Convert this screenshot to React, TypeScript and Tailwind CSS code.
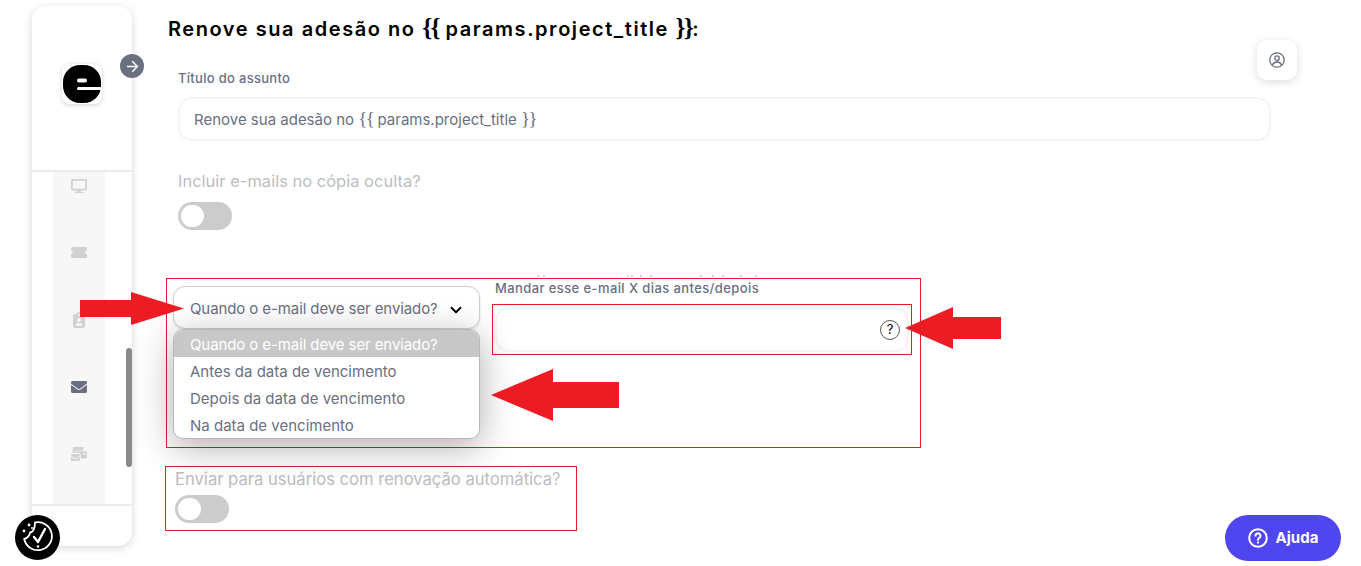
import React from "react";
import { FaDesktop, FaEnvelope, FaMailBulk } from "react-icons/fa";
import { FaClipboardUser } from "react-icons/fa6";
import { ArrowRight, ChevronDown } from "lucide-react";

const font = "font-['Inter','Liberation_Sans',sans-serif]";
const brace = "font-['Liberation_Serif',serif] text-[1.25em] leading-none tracking-[-1.5px]";

function Toggle() {
  return (
    <div className="h-[28px] w-[54px] rounded-full bg-[#cccccc] p-[3px]">
      <div className="h-[22px] w-[23px] rounded-full bg-white" />
    </div>
  );
}

function Arrow({ cls, w, h, points }: { cls: string; w: number; h: number; points: string }) {
  return (
    <svg className={`absolute ${cls}`} width={w} height={h} viewBox={`0 0 ${w} ${h}`}>
      <polygon points={points} fill="#ed1c24" />
    </svg>
  );
}

function NavIcon({ children, className = "text-[#d1d1d1]" }: { children: React.ReactNode; className?: string }) {
  return <div className={`flex h-[67px] items-center justify-center text-[16px] ${className}`}>{children}</div>;
}

function Braced({ before, after }: { before: string; after: string }) {
  return (
    <span>
      {before}
      <span className={brace}>{"{{"}</span>
      {" params.project_title "}
      <span className={brace}>{"}}"}</span>
      {after}
    </span>
  );
}

const ticks = [47, 53, 137, 141, 150, 160, 210, 222, 232, 250, 265];

export default function App() {
  return (
    <div className={`${font} relative flex h-[566px] w-[1361px] overflow-hidden bg-white`}>
      {/* Sidebar */}
      <aside className="relative z-0 ml-[32px] mt-[6px] flex h-[540px] w-[100px] flex-col rounded-[14px] bg-white shadow-[0_2px_8px_rgba(0,0,0,0.16)]">
        <div className="flex h-[166px] items-center justify-center border-b-2 border-[#ececec]">
          <div className="-mt-[8px] h-[40px] w-[40px] rounded-[8px] bg-white shadow-[0_1px_5px_rgba(0,0,0,0.18)]">
            <svg width="40" height="40" viewBox="0 0 40 40">
              <rect x="1" y="1" width="38" height="38" rx="17" fill="#000" />
              <rect x="15" y="23" width="25" height="3" rx="1.500" fill="#fff" />
              <rect x="15" y="14.500" width="10" height="4" rx="2" fill="#fff" />
            </svg>
          </div>
        </div>
        <div className="flex flex-1 flex-col overflow-hidden">
          <div className="ml-[21px] w-[52px] flex-1 bg-[#f7f7f7]">
            <NavIcon className="-mt-[20px] text-[#d1d1d1]"><FaDesktop /></NavIcon>
            <NavIcon>
              <svg width="16" height="11" viewBox="0 0 16 11" fill="#d1d1d1">
                <path d="M1.500 0h13A1.500 1.500 0 0 1 16 1.500v2.300a1.700 1.700 0 0 0 0 3.400v2.300a1.500 1.500 0 0 1-1.500 1.500h-13A1.500 1.500 0 0 1 0 9.500V7.200a1.700 1.700 0 0 0 0-3.400V1.500A1.500 1.500 0 0 1 1.500 0Z" />
              </svg>
            </NavIcon>
            <NavIcon><FaClipboardUser /></NavIcon>
            <NavIcon className="text-[#6b7080]"><FaEnvelope /></NavIcon>
            <NavIcon><FaMailBulk /></NavIcon>
          </div>
        </div>
        <div className="h-[42px] border-t-2 border-[#ececec]" />
        <div className="absolute left-[94px] top-[342px] h-[119px] w-[6px] rounded-full bg-[#8a8a8a]" />
        <div className="absolute left-[88px] top-[48px] flex h-[24px] w-[24px] items-center justify-center rounded-full bg-[#6b7080] text-white">
          <ArrowRight size={17} strokeWidth={2} />
        </div>
      </aside>

      {/* Main */}
      <main className="flex flex-1 flex-col pl-[36px]">
        <h1 className="mt-[15px] h-[26px] text-[20px] font-semibold leading-[26px] tracking-[1.55px] text-black">
          <Braced before="Renove sua adesão no " after=":" />
        </h1>
        <label className="ml-[10px] mt-[29px] text-[13px] font-medium leading-[16px] tracking-[0.3px] text-[#6b7080]">Título do assunto</label>
        <div className="ml-[10px] mt-[11px] flex h-[44px] w-[1093px] items-center rounded-[14px] border-2 border-[#f5f5f5] px-[14px] pt-[2px] text-[15px] text-[#6b7080]">
          <Braced before="Renove sua adesão no " after="" />
        </div>
        <p className="ml-[10px] mt-[28px] text-[16.500px] leading-[24px] text-[#bdbdc2]">Incluir e-mails no cópia oculta?</p>
        <div className="ml-[10px] mt-[9px]"><Toggle /></div>

        {/* Row with the select and the days field */}
        <div className="relative -ml-[2px] mt-[48px] flex h-[170px] w-[755px] border border-[#ed1c24] pl-[6px] pt-[7px]">
          <svg className="absolute left-[328px] -top-[4px]" width="280" height="3" viewBox="0 0 280 3">
            {ticks.map((x) => (
              <rect key={x} x={x - 5} y="0" width="2" height="2" fill="#d6d6d6" />
            ))}
          </svg>
          <div className="relative w-[307px]">
            <div className="flex h-[43px] items-center justify-between rounded-[12px] border border-[#cfcfcf] bg-white pl-[16px] pr-[14px] pt-[4px] text-[15px] text-[#6b7080] shadow-[0_1px_3px_rgba(0,0,0,0.12)]">
              <span className="tracking-[-0.1px]">Quando o e-mail deve ser enviado?</span>
              <ChevronDown size={18} strokeWidth={2.400} className="text-black" />
            </div>
            <ul className="absolute left-0 top-[43px] z-10 h-[110px] w-[307px] overflow-hidden rounded-[10px] border border-[#b8b8b8] bg-white text-[15px] leading-[29px] text-[#6b7080] shadow-[0_8px_36px_rgba(0,0,0,0.32)]">
              <li className="h-[27px] bg-[#c8c8c8] pl-[16px] tracking-[-0.1px] text-white">Quando o e-mail deve ser enviado?</li>
              <li className="h-[27px] pl-[16px]">Antes da data de vencimento</li>
              <li className="h-[27px] pl-[16px]">Depois da data de vencimento</li>
              <li className="h-[27px] pl-[16px]">Na data de vencimento</li>
            </ul>
          </div>
          <div className="ml-[15px] flex flex-col">
            <label className="-mt-[7px] text-[13px] font-medium leading-[18px] tracking-[0.4px] text-[#6b7080]">Mandar esse e-mail X dias antes/depois</label>
            <div className="-ml-[3px] mt-[7px] h-[51px] w-[420px] border border-[#ed1c24] p-[2px]">
              <div className="flex h-full items-center justify-end rounded-[14px] border-2 border-[#f5f5f5] pr-[7px]">
                <div className="flex h-[20px] w-[20px] items-center justify-center rounded-full border border-[#555] text-[13px] leading-none text-black">?</div>
              </div>
            </div>
          </div>
        </div>

        <div className="-ml-[3px] mt-[18px] h-[65px] w-[412px] border border-[#ed1c24] pl-[9px]">
          <p className="text-[16.600px] leading-[24px] text-[#bdbdc2]">Enviar para usuários com renovação automática?</p>
          <div className="mt-[4px]"><Toggle /></div>
        </div>
      </main>

      {/* Overlays */}
      <div className="absolute left-[1257px] top-[40px] flex h-[40px] w-[40px] items-center justify-center rounded-[10px] bg-white shadow-[0_2px_8px_rgba(0,0,0,0.14)]">
        <svg width="16" height="16" viewBox="0 0 16 16" fill="none" stroke="#6b7080" strokeWidth="1.300">
          <circle cx="8" cy="8" r="7.200" />
          <circle cx="8" cy="6.200" r="2.300" />
          <path d="M3.400 13c.8-2 2.400-3 4.600-3s3.800 1 4.600 3" />
        </svg>
      </div>

      <div className="absolute left-[15px] top-[515px] h-[45px] w-[45px] rounded-full bg-black">
        <svg width="45" height="45" viewBox="0 0 45 45" fill="none" stroke="#fff" strokeWidth="1.800" strokeLinecap="round" strokeLinejoin="round">
          <path d="M20 7.500A14 14 0 1 1 9.200 24C12 23.500 15 20.500 15 17.500C18 17.500 20 13 20 7.500Z" />
          <path d="M19 22l4 5 7-13" strokeWidth="2.400" />
          <circle cx="23" cy="31.500" r="1.300" fill="#fff" stroke="none" />
          <circle cx="14" cy="10" r="1.400" fill="#fff" stroke="none" />
          <circle cx="9" cy="16" r="1.400" fill="#fff" stroke="none" />
          <circle cx="17" cy="13" r="1" fill="#fff" stroke="none" />
        </svg>
      </div>

      <div className="absolute left-[1225px] top-[515px] flex h-[46px] w-[116px] items-center justify-center gap-[8px] rounded-full bg-[#5046ef] text-[15px] font-bold text-white">
        <svg width="20" height="20" viewBox="0 0 20 20" fill="none" stroke="#fff" strokeWidth="2">
          <circle cx="10" cy="10" r="8.800" />
          <path d="M7.500 7.800a2.500 2.500 0 1 1 3.800 2.100c-.9.600-1.300 1-1.300 2" strokeLinecap="round" />
          <circle cx="10" cy="14.600" r="1.100" fill="#fff" stroke="none" />
        </svg>
        Ajuda
      </div>

      <Arrow cls="left-[80px] top-[292px] z-20" w={105} h={34} points="0,8 51,8 51,0 104,16.500 51,33 51,25 0,25" />
      <Arrow cls="left-[905px] top-[307px] z-20" w={97} h={42} points="0,21 48,0 48,10 96,10 96,32 48,32 48,42" />
      <Arrow cls="left-[491px] top-[369px] z-20" w={129} h={52} points="0,26 62,0 62,13 128,13 128,39 62,39 62,52" />
    </div>
  );
}
